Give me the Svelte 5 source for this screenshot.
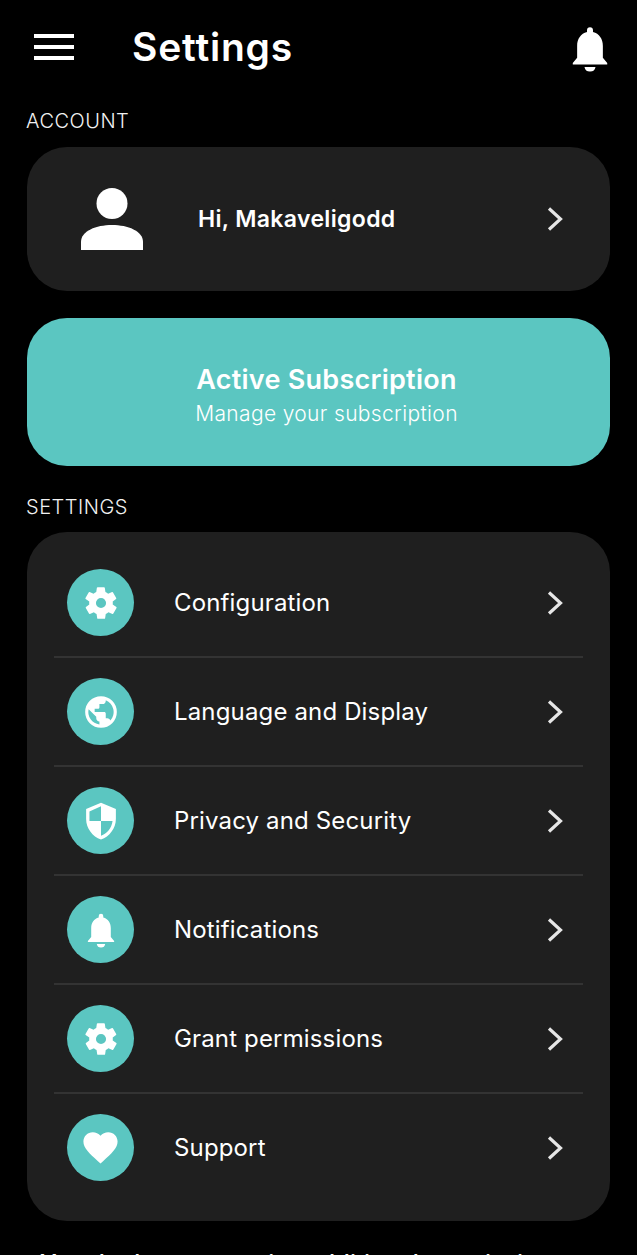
<script>
  const rows = [
    { label: 'Configuration', icon: 'gear' },
    { label: 'Language and Display', icon: 'globe' },
    { label: 'Privacy and Security', icon: 'shield' },
    { label: 'Notifications', icon: 'bell' },
    { label: 'Grant permissions', icon: 'gear' },
    { label: 'Support', icon: 'heart' }
  ];

  const bellPath = 'M12 22a2.4 2.4 0 0 0 2.4-2H9.6a2.4 2.4 0 0 0 2.4 2zM19.500 18.900v-.6L17.600 16v-5.200c0-3-1.600-5.300-4.300-6V4a1.300 1.300 0 0 0-2.600 0v.8c-2.700.7-4.300 3-4.300 6V16l-1.900 2.300v.6z';
  const gearPath = 'M19.400 13a7.800 7.800 0 0 0 0-2l2.100-1.600a.5.5 0 0 0 .1-.6l-2-3.500a.5.5 0 0 0-.6-.2l-2.500 1a7.300 7.300 0 0 0-1.700-1l-.4-2.700a.5.5 0 0 0-.5-.4h-4a.5.5 0 0 0-.5.4l-.4 2.700a7.300 7.300 0 0 0-1.700 1l-2.500-1a.5.5 0 0 0-.6.2l-2 3.500a.5.5 0 0 0 .1.6L4.600 11a7.800 7.800 0 0 0 0 2l-2.100 1.600a.5.5 0 0 0-.1.6l2 3.500a.5.5 0 0 0 .6.2l2.500-1a7.300 7.300 0 0 0 1.700 1l.4 2.700a.5.5 0 0 0 .5.4h4a.5.5 0 0 0 .5-.4l.4-2.700a7.300 7.300 0 0 0 1.700-1l2.500 1a.5.5 0 0 0 .6-.2l2-3.500a.5.5 0 0 0-.1-.6zM12 15.200a3.200 3.200 0 1 1 0-6.400 3.200 3.200 0 0 1 0 6.400z';
  const globePath = 'M12 2a10 10 0 1 0 0 20 10 10 0 0 0 0-20zm-1 17.900A8 8 0 0 1 4.200 10.200L9 15v1c0 1.100.9 2 2 2zm6.900-2.500c-.3-.8-1-1.400-1.900-1.400h-1v-3c0-.6-.4-1-1-1H8v-2h2c.6 0 1-.4 1-1V7h2c1.100 0 2-.9 2-2v-.4a8 8 0 0 1 2.900 12.800z';
  const shieldPath = 'M12 1.500 3.500 5.200v5.600c0 5.200 3.600 10.100 8.500 11.700 4.900-1.600 8.500-6.500 8.500-11.700V5.200zm0 10.500h6.600c-.5 3.900-3.100 7.300-6.600 8.400V12H5.400V6.500L12 3.600z';
  const heartPath = 'M12 21.300 10.500 20C5.400 15.400 2 12.300 2 8.500 2 5.400 4.400 3 7.500 3c1.700 0 3.400.8 4.500 2.100C13.100 3.800 14.800 3 16.500 3 19.600 3 22 5.400 22 8.500c0 3.800-3.400 6.900-8.500 11.500z';
  const paths = { gear: gearPath, globe: globePath, shield: shieldPath, bell: bellPath, heart: heartPath };
</script>

{#snippet chevron()}
  <svg class="chevron" viewBox="0 0 18 26" fill="none" stroke="currentColor" stroke-width="3.200">
    <path d="M3 2.500 14.500 13 3 23.500" />
  </svg>
{/snippet}

<div class="page">
  <header class="topbar">
    <button class="menu" aria-label="Menu"><span></span><span></span><span></span></button>
    <h1>Settings</h1>
    <svg class="top-bell" viewBox="4.200 2.600 15.600 19.600" fill="#fff"><path d={bellPath} /></svg>
  </header>

  <h2 class="section first">ACCOUNT</h2>
  <div class="card account">
    <svg class="person" viewBox="0 0 62 62" fill="#fff">
      <ellipse cx="31" cy="15.500" rx="15.500" ry="15.500" />
      <path d="M0 62V54C0 43 15 37 31 37s31 6 31 17v8z" />
    </svg>
    <span class="name">Hi, Makaveligodd</span>
    {@render chevron()}
  </div>

  <div class="subscription">
    <strong>Active Subscription</strong>
    <span>Manage your subscription</span>
  </div>

  <h2 class="section second">SETTINGS</h2>
  <div class="card list">
    {#each rows as row}
      <div class="row">
        <div class="badge">
          <svg class="icon-{row.icon}" viewBox="0 0 24 24" fill="#fff"><path fill-rule="evenodd" d={paths[row.icon]} /></svg>
        </div>
        <span class="label">{row.label}</span>
        {@render chevron()}
      </div>
    {/each}
  </div>

  <p class="note">You don't want to miss additional permissions</p>
</div>

<style>
  :global(body) {
    margin: 0;
    background: #000;
  }

  .page {
    width: 637px;
    height: 1255px;
    overflow: hidden;
    box-sizing: border-box;
    padding: 0 27px;
    background: #000;
    color: #fff;
    font-family: Inter, "Noto Sans", sans-serif;
  }

  .topbar {
    display: flex;
    align-items: center;
    height: 94px;
    padding: 0 2px 0 7px;
  }

  .menu {
    display: flex;
    flex-direction: column;
    gap: 7px;
    width: 40px;
    padding: 0;
    border: none;
    background: none;
  }

  .menu span {
    display: block;
    height: 4px;
    background: #fff;
  }

  h1 {
    flex: 1;
    margin: 0 0 2px 58px;
    font-size: 39px;
    font-weight: 600;
    letter-spacing: 0.8px;
  }

  .top-bell {
    width: 36px;
    height: 45px;
    margin-top: 4px;
  }

  .section {
    margin: 0 0 0 -1px;
    font-size: 20px;
    line-height: 24px;
    font-weight: 300;
    letter-spacing: 0.5px;
    color: #f2f2f2;
  }

  .section.first {
    margin-top: 15px;
  }

  .section.second {
    padding-top: 2px;
  }

  .card {
    background: #1f1f1f;
    border-radius: 40px;
  }

  .account {
    display: flex;
    align-items: center;
    height: 144px;
    margin-top: 14px;
    padding: 0 46px 0 54px;
    box-sizing: border-box;
  }

  .person {
    width: 62px;
    height: 62px;
    margin-right: 55px;
  }

  .name {
    flex: 1;
    font-size: 23px;
    font-weight: 600;
    letter-spacing: 0.35px;
  }

  .chevron {
    width: 18px;
    height: 26px;
    color: #e6e6e6;
  }

  .subscription {
    display: flex;
    flex-direction: column;
    align-items: center;
    justify-content: center;
    height: 148px;
    margin: 27px 0 27px;
    padding: 6px 0 0 16px;
    box-sizing: border-box;
    border-radius: 40px;
    background: #5bc6c1;
  }

  .subscription strong {
    font-size: 27px;
    font-weight: 600;
    line-height: 32px;
    letter-spacing: 0.25px;
  }

  .subscription span {
    margin-top: 6px;
    font-size: 21px;
    font-weight: 300;
    line-height: 24px;
    letter-spacing: 0.35px;
  }

  .list {
    margin-top: 13px;
    padding: 17px 27px 24px;
    height: 689px;
    box-sizing: border-box;
  }

  .row {
    display: flex;
    align-items: center;
    height: 107px;
    padding: 0 19px 0 13px;
    border-bottom: 2px solid #333;
  }

  .row:last-child {
    border-bottom: none;
  }

  .badge {
    display: flex;
    align-items: center;
    justify-content: center;
    width: 67px;
    height: 67px;
    border-radius: 50%;
    background: #5bc6c1;
    margin-right: 40px;
  }

  .badge svg {
    width: 38px;
    height: 38px;
  }

  .badge svg.icon-bell,
  .badge svg.icon-shield {
    width: 42px;
    height: 42px;
  }

  .badge svg.icon-heart {
    width: 41px;
    height: 41px;
  }

  .label {
    flex: 1;
    font-size: 24px;
    font-weight: 400;
    letter-spacing: 0.15px;
  }

  .note {
    margin: 28px 0 0 13px;
    font-size: 24px;
    font-weight: 500;
    line-height: 30px;
    white-space: nowrap;
  }
</style>
